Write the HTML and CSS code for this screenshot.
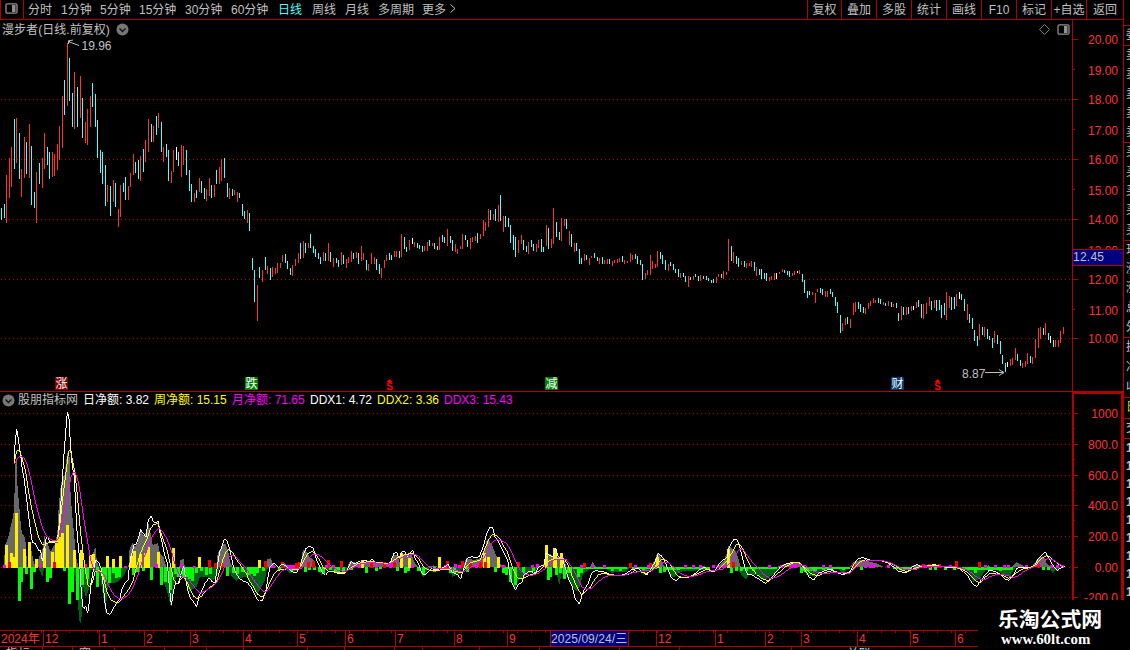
FILE: index.html
```html
<!DOCTYPE html>
<html lang="zh-CN">
<head>
<meta charset="utf-8">
<title>漫步者 日线</title>
<link rel="stylesheet" href="styles.css">
</head>
<body>
<div class="app">
  <main class="main">
    <header class="toolbar">
      <div class="toggle">
        <svg class="panel-icon" width="13" height="11" viewBox="0 0 13 11"><rect x="1" y=".8" width="11" height="9.4" rx="1.5"/><rect class="solid" x="7" y="2" width="3.5" height="7"/></svg>
      </div>
      <nav class="periods">
        <span>分时</span><span>1分钟</span><span>5分钟</span><span>15分钟</span><span>30分钟</span><span>60分钟</span><span class="active">日线</span><span>周线</span><span>月线</span><span>多周期</span><span>更多</span>
        <svg width="8" height="12" viewBox="0 0 8 12"><path class="more" d="M1.5 1.5 6 5.5 1.5 9.5"/></svg>
      </nav>
      <nav class="tools">
        <span>复权</span><span>叠加</span><span>多股</span><span>统计</span><span>画线</span><span>F10</span><span>标记</span><span>+自选</span><span>返回</span>
      </nav>
    </header>

    <section class="pane price-pane">
      <svg class="plot" width="1072" height="371" viewBox="0 20 1072 371">
        <g id="price-grid"></g>
        <g id="candles"></g>
        <g class="note">
          <path d="M68.5 44V41.5H70M68 41.5l11 4M68 41l5-1"/>
          <text x="81.500" y="50">19.96</text>
          <path d="M985 372.500H1004M999 369.500l5 3-5 3"/>
          <text x="962" y="378">8.87</text>
        </g>
        <g class="flag">
          <path class="rise" d="M55 377h12l1 1v12H55z"/><text x="55.500" y="388">涨</text>
          <path class="fall" d="M245 377h12l1 1v12h-13z"/><text x="245.500" y="388">跌</text>
          <path class="fall" d="M545 377h12l1 1v12h-13z"/><text x="545.500" y="388">减</text>
          <path class="report" d="M891 377h12l1 1v12h-13z"/><text x="891.500" y="388">财</text>
        </g>
        <g class="dividend">
          <path d="M386.500 382l3-3 3 3z"/><text x="386.300" y="390">S</text>
          <path d="M934.500 382l3-3 3 3z"/><text x="934.300" y="390">S</text>
        </g>
      </svg>
      <svg class="scale" width="51" height="371" viewBox="1072 20 51 371" id="price-scale"></svg>
      <div class="pane-title">
        <span>漫步者(日线.前复权)</span>
        <svg width="13" height="13" viewBox="0 0 13 13"><circle class="knob" cx="6.500" cy="6.500" r="6"/><path class="chevron" d="M3.500 5.500l3 3 3-3"/></svg>
      </div>
      <div class="pane-actions">
        <svg width="11" height="11" viewBox="0 0 11 11"><path class="diamond" d="M5.500.5l5 5-5 5-5-5z"/></svg>
        <svg class="panel-icon" width="13" height="11" viewBox="0 0 13 11"><rect x="1" y=".8" width="11" height="9.4" rx="1.500"/><rect class="solid" x="7" y="2" width="3.500" height="7"/></svg>
      </div>
      <div class="cursor-price">12.45</div>
    </section>

    <section class="pane flow-pane">
      <svg class="plot" width="1072" height="238" viewBox="0 392 1072 238">
        <g id="flow-grid"></g>
        <g id="flow"></g>
      </svg>
      <svg class="scale" width="51" height="238" viewBox="1072 392 51 238" id="flow-scale"></svg>
      <div class="legend">
        <svg width="13" height="13" viewBox="0 0 13 13"><circle class="knob" cx="6.500" cy="6.500" r="6"/><path class="chevron" d="M3.500 5.500l3 3 3-3"/></svg>
        <span>股朋指标网</span><span class="w">日净额: 3.82</span><span class="y">周净额: 15.15</span><span class="m">月净额: 71.65</span><span class="w">DDX1: 4.72</span><span class="y">DDX2: 3.36</span><span class="m">DDX3: 15.43</span>
      </div>
    </section>

    <div class="timeline">
      <span>2024年</span><span>12</span><span>1</span><span>2</span><span>3</span><span>4</span><span>5</span><span>6</span><span>7</span><span>8</span><span>9</span><span class="cursor-date">2025/09/24/三</span><span></span><span>12</span><span>1</span><span>2</span><span>3</span><span>4</span><span>5</span><span>6</span>
    </div>
    <div class="tabs">
      <i>指标</i><i></i><i>窗</i><i></i><i></i><i></i><i></i><i></i><i></i><i></i><i></i><i></i><i></i><i></i><i></i><i class="cy">关联</i>
    </div>
  </main>

  <aside class="quotes">
    <div class="group one"><b>委</b></div>
    <div class="group five"><b>卖</b><b>卖</b><b>卖</b><b>卖</b><b>卖</b></div>
    <div class="group five"><b>买</b><b>买</b><b>买</b><b>买</b><b>买</b></div>
    <div class="group five"><b>现</b><b>涨</b><b>涨</b><b>总</b><b>外</b></div>
    <div class="group three"><b>换</b><b>净</b><b>收</b></div>
    <div class="group tab"><b>日</b></div>
    <div class="group one"><b>交</b></div>
    <div class="ticks"><b>1</b><b>1</b><b>1</b><b>1</b><b>1</b><b>1</b><b>1</b><b>1</b><b>1</b></div>
  </aside>

  <div class="watermark"><strong>乐淘公式网</strong><em>www.60lt.com</em></div>
</div>
<script src="chart.js"></script>
</body>
</html>
```

FILE: styles.css
```css
* { box-sizing: border-box; }
body {
  margin: 0;
  background: #000;
  color: #c0c0c0;
  font: 12px/16px "Liberation Sans", "Noto Sans CJK SC", sans-serif;
  overflow: hidden;
}
span, b, i { white-space: nowrap; }
svg { display: block; flex: none; }
.app { position: relative; display: flex; width: 1130px; height: 650px; overflow: hidden; }
.main { width: 1123px; display: flex; flex-direction: column; }

.toolbar { height: 20px; display: flex; border-bottom: 1px solid #b00000; }
.toggle { width: 24px; padding: 3px 0 0 4px; border: solid #b00000; border-width: 0 1px; }
.panel-icon rect { fill: none; stroke: #909090; stroke-width: 1.3; }
.panel-icon .solid { fill: #909090; stroke: none; }
.periods {
  width: 783px; padding: 2px 0 0 4px; display: grid; align-items: start;
  grid-template-columns: 33px 39px 39px 46px 46px 47px 34px 33px 33px 44px 27px 10px;
}
.periods svg { margin-top: 1px; }
.more { fill: none; stroke: #c0c0c0; }
.active { color: #54fcfc; }
.tools { display: grid; grid-template-columns: 34px repeat(7, 35px) 37px; text-align: center; }
.tools span { border-left: 1px solid #b00000; padding-top: 2px; }

.pane { position: relative; display: flex; flex: none; }
.price-pane { height: 372px; border-bottom: 1px solid #b00000; }
.flow-pane { height: 238px; }
.pane-title { position: absolute; left: 2px; top: 2px; display: flex; align-items: center; gap: 6px; letter-spacing: .05px; }
.pane-title svg { margin-top: -2px; }
.pane-actions { position: absolute; left: 1039px; top: 4px; display: flex; gap: 7px; }
.knob { fill: #777; }
.chevron { fill: none; stroke: #111; stroke-width: 1.4; }
.diamond { fill: none; stroke: #808080; }
.cursor-price {
  position: absolute; left: 1072px; top: 229px; width: 51px; height: 17px;
  border: solid #b00000; border-width: 1px 0 1px 1px; background: #000080;
  line-height: 14px; letter-spacing: .25px;
}
.legend {
  position: absolute; left: 2px; top: 0; display: grid; align-items: center;
  grid-template-columns: 16px 65px 71px 78px 78px 67px 67px 80px;
}
.w { color: #fff; }
.y { color: #ff0; }
.m { color: #f0f; }

.dots { stroke: #b00000; stroke-dasharray: 1 3; shape-rendering: crispEdges; }
.ruler { stroke: #b00000; shape-rendering: crispEdges; fill: none; }
.thick { stroke: #b00000; stroke-width: 2; shape-rendering: crispEdges; fill: none; }
.scale text { fill: #ff3232; font-size: 12px; text-anchor: end; }
.note path { fill: none; stroke: #c0c0c0; }
.note text { fill: #c0c0c0; font-size: 12px; }
.flag text { fill: #fff; font-size: 12px; }
.rise { fill: #800000; }
.fall { fill: #008000; }
.report { fill: #003c70; }
.dividend { fill: #f00; font-weight: bold; font-size: 10px; }
.k { stroke-width: 1; shape-rendering: crispEdges; }
.k.up { stroke: #ff3232; }
.k.down { stroke: #54fcfc; }
.k.flat { stroke: #fff; }
#flow { shape-rendering: crispEdges; }
.gray { fill: #696969; }
.dark { fill: #006414; }
.green { fill: #0f0; }
.yellow { fill: #ffee00; }
.red { fill: #f00; }
.mag { fill: #f0f; }
.line { fill: none; stroke-width: 3; }
.line.white { stroke: #fff; }
.line.gold { stroke: #ff0; }
.line.pink { stroke: #f0f; }

.timeline {
  height: 17px; width: 978px; display: grid; color: #ff3232;
  border: solid #b00000; border-width: 1px 0; line-height: 17px; flex: none;
  grid-template-rows: 15px;
  grid-template-columns: 43px 56px 45px 46px 53px 54px 48px 50px 59px 53px 43px 78px 28px 59px 50px 36px 56px 53px 45px 23px;
  background: repeating-linear-gradient(90deg, transparent 0 13px, #b00000 13px 14px) 0 0 / 100% 2px no-repeat;
}
.timeline span { border-left: 1px solid #b00000; padding-left: 1px; }
.timeline span:first-child { border: 0; }
.timeline .cursor-date { background: #000080; color: #c0c0c0; padding: 0; letter-spacing: .07px; }
.tabs {
  height: 3px; width: 978px; overflow: hidden; display: grid; line-height: 14px; flex: none;
  grid-template-columns: 43px 30px 42px 50px 42px 37px 64px 37px 50px 28px 57px 60px 80px 60px 112px 1fr;
}
.tabs i { font-style: normal; border-right: 1px solid #b00000; padding-left: 6px; }
.tabs .cy { color: #54fcfc; padding-left: 55px; border: 0; }

.quotes { width: 7px; border-left: 1px solid #b00000; overflow: hidden; padding-top: 25px; }
.quotes b { display: block; font-weight: normal; flex: 1; padding-left: 2px; line-height: 18px; }
.group { border-top: 1px solid #b00000; display: flex; flex-direction: column; overflow: hidden; }
.one { height: 20px; }
.five { height: 97.400px; }
.three { height: 60px; }
.tab { height: 21px; color: #d8d800; }
.ticks { border-top: 1px solid #b00000; }
.quotes .ticks b { height: 18px; font-weight: bold; }

.watermark {
  position: absolute; left: 978px; top: 600px; width: 152px; height: 50px; background: #000; color: #fff;
  display: flex; flex-direction: column; padding: 6px 0 0 20px;
}
.watermark strong { font: bold 20.800px/24px "Noto Sans CJK SC", sans-serif; white-space: nowrap; }
.watermark em { font: bold 14.900px/18px "Liberation Serif", serif; padding-left: 3px; }
```

FILE: chart.js
```js
const el = id => document.getElementById(id);
const seg = (cls, x1, y1, x2, y2) => `<path class="${cls}" d="M${x1} ${y1}L${x2} ${y2}"/>`;

// Horizontal dotted guides
el('price-grid').innerHTML = [99, 159, 219, 279, 338].map(y => seg('dots', 1, y + .5, 1071, y + .5)).join('');
el('flow-grid').innerHTML = [413, 444, 475, 505, 536, 567, 597].map(y => seg('dots', 1, y + .5, 1071, y + .5)).join('');

// Value scales
const label = (y, t) => `<text x="1118" y="${y + 5}">${t}</text>`;
let s = seg('ruler', 1072.5, 20, 1072.5, 391);
[[39, '20.00'], [69, '19.00'], [99, '18.00'], [129, '17.00'], [159, '16.00'], [189, '15.00'], [219, '14.00'],
 [249, '13.00'], [279, '12.00'], [309, '11.00'], [338, '10.00']].forEach(([y, t], i) => {
  s += seg('ruler', 1073, y + .5, i % 2 ? 1075 : 1078, y + .5) + label(i % 2 ? y + 1 : y, t);
});
el('price-scale').innerHTML = s;
s = '<path class="thick" d="M1073 630V393H1122V630"/>';
[[413, '1000'], [444, '800.0'], [475, '600.0'], [505, '400.0'], [536, '200.0'], [567, '0.00'], [597, '-200.0']].forEach(([y, t], i) => {
  s += seg('ruler', 1074, y + .5, 1078, y + .5) + (i < 6 ? seg('ruler', 1074, y + 15.5, 1075, y + 15.5) : '') + label(y, t);
});
el('flow-scale').innerHTML = s;

// Daily high-low bars: direction, x, top, bottom in thirds of a pixel from each block's origin
const bars = [
[0, 0, `c 4 624 660;c 13 612 654;r 19 525 669;r 28 474 594;r 34 441 561;c 43 357 507;r 49 354 489;c 58 399 537;r 64 507 591;r 73 411 534;c 79 426 522;r 88 372 534;c 94 438 615;c 103 576 624;r 109 516 669;c 118 489 552;r 127 474 564;r 133 399 507;c 142 441 495;c 148 456 537;r 157 456 531;r 163 462 528;r 172 432 510;r 178 378 480;r 187 288 444;c 193 240 345;r 202 129 318;c 208 174 303;c 217 279 381;r 223 216 387;c 232 261 381;r 241 228 354;c 247 294 414;r 256 366 429;r 262 327 435;r 271 288 381;c 277 249 321;c 286 282 381;c 292 360 474;c 301 450 519;c 307 456 552;c 316 495 618;r 322 555 606;c 331 558 648;r 340 540 606;c 346 549 621;r 355 627 681;r 361 555 651;c 370 549 576;c 376 531 600;r 385 558 600;r 391 519 561;r 400 462 525;c 406 486 519;c 415 480 537;r 421 468 543;c 430 447 516;r 436 420 486;r 445 357 456;c 454 372 426;r 460 378 426;c 469 348 405;r 475 339 384;c 484 366 456;r 490 441 486;c 499 432 471;c 505 450 543;r 514 513 549;r 520 450 516;w 529 441 480;c 535 456 498;r 544 435 531;r 550 438 495;c 559 450 525;c 568 510 573;c 574 552 606;r 583 579 606;c 589 570 594;r 598 534 576;c 604 543 579;c 613 564 597;r 619 567 603;r 628 534 588;c 634 555 594;r 643 555 591;c 649 510 552;r 658 501 552;r 664 477 543;c 673 474 534;c 682 549 591;r 688 564 597;c 697 567 588;r 703 570 585;r 712 576 606;c 718 579 594;c 727 612 648;c 733 633 657;r 742 630 669;c 748 639 693`],
[0, 240, `c 757 54 90;c 763 90 186;r 772 135 243;c 778 81 114;r 787 90 126;c 796 51 90;r 802 78 102;c 811 84 120;r 817 81 111;r 826 84 102;r 832 69 99;r 841 69 84;r 847 45 66;c 856 42 69;c 862 63 87;c 871 84 105;r 877 75 108;r 886 57 78;r 895 39 69;c 901 9 57;r 910 3 54;c 916 9 39;r 925 9 24;c 931 -18 24;c 940 18 39;c 946 27 51;c 955 39 57;c 961 51 72;r 970 36 63;c 976 39 63;r 985 9 63;c 991 36 66;r 1000 54 81;c 1009 54 69;c 1015 60 81;r 1024 36 75;c 1030 45 72;r 1039 57 84;r 1045 51 69;r 1054 33 66;c 1060 39 57;r 1069 36 54;c 1075 39 72;r 1084 18 63;r 1090 39 60;c 1099 60 90;r 1105 72 93;r 1114 39 72;r 1123 51 72;c 1129 57 90;c 1138 72 102`],
[380, 180, `r 4 264 294;r 13 240 264;r 19 225 243;c 28 219 240;c 34 225 240;r 43 213 231;r 49 213 231;c 58 213 234;r 64 162 231;c 73 171 207;c 79 201 216;r 88 180 210;w 97 174 192;r 103 186 201;c 112 189 204;c 118 195 207;c 127 198 216;r 133 198 213;r 142 186 213;c 148 180 198;r 157 189 198;c 163 189 207;c 172 198 210;r 178 171 210;c 187 165 186;c 193 171 189;r 202 147 198;c 211 168 189;c 217 180 213;r 226 192 216;r 232 207 222;r 241 198 207;r 247 162 207;c 256 165 180;c 262 180 201;r 271 174 207;r 277 171 186;r 286 168 183;c 292 159 189;r 301 162 177;r 310 120 168;r 316 126 153;r 325 87 141;c 331 90 120;r 340 102 120;c 346 87 123;r 355 75 126;c 361 45 123;r 370 108 156;c 376 108 141;c 385 114 141;c 391 135 189;c 400 165 210;c 406 171 231;r 415 180 219;r 424 165 192;c 430 180 210;c 439 198 216;r 445 186 222;c 454 180 201;c 460 192 213;r 469 192 216;r 475 180 204;c 484 177 216;c 490 201 216;r 499 135 198;c 505 144 207;r 514 177 204;r 520 84 192;c 529 126 171;c 538 156 180;r 544 114 183;r 553 117 138;c 559 117 147;r 568 153 195;c 574 162 201;r 583 189 216;c 589 189 213;c 598 207 252;c 604 234 252;r 613 222 243;c 619 225 240;r 628 234 255;r 634 228 234;c 643 219 234;c 652 231 243;r 658 234 252;c 667 231 252;r 673 240 252;r 682 237 252;c 688 237 252;r 697 243 258;r 703 240 249;r 712 237 249;r 718 234 246;c 727 228 246;r 733 240 252;r 742 243 249;r 751 219 246;r 757 225 240;c 766 222 237;c 772 228 252;c 781 240 255;c 787 252 300;r 796 279 297;r 802 270 285;r 811 225 285;r 817 243 267;r 826 252 264;r 832 213 261;c 841 216 237;c 847 225 252;c 856 240 270;r 865 252 273;c 871 246 258;c 880 252 270;c 886 267 279;c 895 267 291;r 901 279 294;c 910 279 291;c 916 288 306;r 925 288 321;c 931 291 300;r 940 288 300;c 946 282 291;c 955 288 303;r 961 285 303;c 970 288 297;c 979 288 300;c 985 294 303;c 994 300 309;c 1000 297 309;r 1009 291 309;r 1015 282 291;c 1024 282 294;r 1030 273 297;r 1039 276 285;r 1045 177 273;c 1054 198 243;r 1060 216 249;c 1069 228 252;c 1075 234 261;r 1084 243 255;c 1093 243 261;r 1099 249 264;r 1108 249 258;r 1114 243 261;c 1123 246 273;r 1129 261 288;c 1138 267 285`],
[760, 230, `c 4 117 147;c 13 129 147;c 19 129 153;r 28 141 153;r 34 138 150;r 43 129 150;w 49 129 147;r 58 126 132;r 67 117 126;c 73 120 129;c 82 123 135;c 88 123 141;r 97 129 138;r 103 123 135;w 112 123 129;r 118 120 132;c 127 132 156;c 133 150 189;c 142 183 204;c 148 183 195;r 157 186 195;r 166 189 219;r 172 177 186;c 181 174 189;c 187 177 195;r 196 183 201;r 202 183 201;c 211 177 192;c 217 186 201;c 226 201 228;c 232 216 249;c 241 255 309;r 247 279 303;r 256 264 285;c 262 261 282;r 271 267 294;r 280 219 255;r 286 216 246;c 295 216 237;c 301 222 246;c 310 231 249;r 316 234 252;r 325 219 237;r 331 213 228;r 340 204 219;r 346 210 219;c 355 204 219;c 361 207 222;r 370 216 225;c 376 219 228;r 385 213 228;c 394 216 231;r 400 222 231;c 409 219 234;c 415 249 273;r 424 228 270;c 430 231 255;r 439 231 255;c 445 231 252;r 454 228 243;w 460 228 240;r 469 216 234;c 475 210 231;c 484 222 264;r 490 222 267;r 499 219 252;r 508 201 228;c 514 213 240;r 523 210 234;c 529 210 243;c 538 210 240;c 544 225 264;c 553 219 255;r 559 186 270;r 568 198 234;c 574 201 240;c 583 201 237;r 589 192 228;w 598 186 207;c 604 192 210;c 613 207 243;r 622 222 270;c 628 252 279;c 637 264 297;c 643 300 333;c 652 318 348;r 658 282 330;c 667 291 315;r 673 291 321;c 682 297 327;c 688 318 330;c 697 324 354;r 703 303 339;c 712 315 342;c 721 333 372;c 727 375 402;c 736 399 426;w 742 396 411;r 751 387 408;r 757 384 405;r 766 354 390;c 772 372 393;c 781 390 408;r 787 399 414;r 796 393 411;r 802 369 402;c 811 378 399;r 817 381 402;r 826 327 384;r 835 294 354;r 841 291 327;c 850 294 315;r 856 279 315;c 865 309 330;w 871 318 339;c 880 330 351;r 886 330 351;r 895 330 351;r 901 303 339;r 910 291 312`]];
const kind = { c: 'down', r: 'up', w: 'flat' };
el('candles').innerHTML = bars.map(([ox, oy, d]) => d.split(';').map(b => {
  const [k, x, a, z] = b.split(' ');
  const px = ox + Math.floor(x / 3) + .5;
  return seg('k ' + kind[k], px, oy + a / 3, px, oy + z / 3);
}).join('')).join('');

// Money-flow histogram and DDX curves, same units as above
const flow = [
{ ox: 0, oy: 390, zero: 531,
  gray: '12,531 15,465 22,450 28,430 34,400 40,380 44,300 48,180 50,215 53,300 58,350 62,400 66,430 72,437 76,450 82,531 84,531 90,460 100,510 106,531 118,500 127,480 133,438 139,455 145,465 151,485 157,475 166,460 172,430 176,350 182,290 188,255 193,260 199,210 203,185 208,180 211,300 217,380 223,440 228,500 235,531 268,531 274,500 280,487 286,468 290,510 296,531 385,531 389,475 398,457 405,470 412,460 421,420 430,435 440,425 445,400 452,430 458,465 466,462 474,460 480,490 490,500 499,531 538,531 541,510 552,507 554,531 649,531 653,490 662,475 668,460 676,462 684,480 690,515 697,531 795,531 802,508 812,505 818,520 825,525 828,531',
  dark: '115,531 127,560 133,531 215,531 225,560 233,630 240,710 246,670 250,590 258,625 268,590 272,540 290,545 300,560 310,620 317,670 322,600 330,580 345,580 360,570 372,555 385,531 475,531 490,570 500,600 514,655 520,590 530,560 540,560 550,555 560,580 568,605 575,600 590,590 600,560 620,560 640,572 650,560 660,531 685,531 695,560 710,572 720,565 740,560 760,590 770,612 780,600 795,570 800,540 810,531',
  yellow: '19,465 34,489 40,500 49,369 73,477 88,456 109,508 133,474 157,486 169,460 178,440 187,430 202,405 223,480 243,480 271,495 279,492 322,498 340,507 361,498 393,498 402,484 421,493 436,488 445,472 475,487 520,474 598,501 778,510',
  red: '28,516 163,516 628,510 796,513 646,518 664,520', mag: '12,526 121,526 256,522 376,528 469,522 543,522 583,528 820,528',
  green: '58,632 64,576 79,552 94,597 103,545 142,576 151,563 193,542 208,641 217,605 232,629 247,585 262,567 292,591 310,560 316,575 328,578 340,550 349,565 358,560 400,556 411,545 430,542 454,570 484,585 496,575 511,600 526,552 535,560 550,560 560,560 568,567 577,572 590,550 605,542 618,556 632,552 682,557 700,548 712,552 726,545 745,555 754,553 763,558 772,550 790,542',
  white: '43,222 45,165 50,118 54,140 58,170 63,205 67,240 73,270 79,320 85,370 91,420 97,457 105,460 115,480 122,482 127,514 132,490 138,447 143,438 148,453 160,457 172,455 178,400 184,320 190,220 196,140 202,65 207,85 211,160 217,230 223,260 227,350 232,440 238,500 243,590 248,650 254,655 257,647 263,670 268,635 273,580 280,540 287,510 296,518 303,535 310,590 316,650 321,670 330,673 340,655 350,640 360,625 365,600 375,580 384,570 388,530 393,500 402,465 410,460 415,445 422,418 429,430 438,440 445,390 454,378 460,395 468,398 474,393 480,430 487,460 494,495 502,520 508,590 514,645 520,605 526,580 536,582 545,545 551,528 556,560 563,600 572,625 580,635 590,650 598,615 606,600 615,580 628,563 636,575 645,578 652,530 658,490 667,465 674,446 682,455 688,475 694,500 700,530 708,550 718,565 730,573 742,577 752,590 762,610 770,625 779,634 788,630 798,600 806,550 810,530',
  gold: '43,222 46,200 50,184 58,180 66,205 76,240 85,300 95,355 105,400 115,440 127,465 135,464 145,458 160,455 172,453 180,400 190,310 200,230 206,182 211,180 217,210 223,240 229,285 235,350 241,420 248,480 256,540 264,585 270,590 278,575 285,545 295,541 303,545 312,570 322,610 335,632 350,638 358,637 370,620 385,600 400,570 410,530 420,495 430,470 440,450 450,420 460,405 474,400 482,425 492,455 500,475 510,520 520,565 530,583 540,570 550,560 560,575 572,600 582,620 592,626 605,618 620,600 635,588 648,580 660,540 670,505 680,482 688,478 700,490 710,510 725,530 738,550 750,575 760,590 772,612 782,620 792,617 800,600 810,575',
  pink: '43,222 50,208 60,199 72,203 82,225 92,265 105,330 115,370 127,412 140,438 150,448 165,453 175,448 185,410 195,360 205,300 212,265 218,248 225,246 235,275 242,320 252,390 262,450 272,510 282,538 300,545 312,555 325,585 340,612 355,626 370,625 385,615 400,590 412,560 425,520 440,482 452,450 465,425 477,415 488,425 500,445 512,475 524,520 538,555 552,562 565,567 580,587 595,605 605,609 620,600 640,588 655,570 670,540 684,505 695,495 708,500 722,518 738,535 755,560 770,582 785,600 795,606 805,600 810,592' },
{ ox: 270, oy: 390, zero: 531,
  gray: '35,531 45,518 50,531 92,531 98,482 105,480 118,500 130,510 138,531 232,531 240,512 262,520 300,515 352,522 362,512 372,495 382,495 390,520 395,490 425,495 432,515 445,531 470,531 490,526 505,531 580,531 588,505 615,510 640,500 650,450 657,450 668,470 680,500 690,522 712,531 818,531 828,495 840,490 850,500 865,500 880,520 885,531',
  dark: '40,531 60,550 85,540 90,531 140,531 155,555 165,540 230,545 235,531 445,531 460,563 470,545 480,531 536,531 547,560 570,550 580,531 708,531 720,560 735,598 745,570 760,560 775,550 800,545 810,531 855,531 868,585 875,550 885,560 885,531',
  yellow: '276,511 395,488 418,505 508,501 642,490 655,500 686,501 829,466 852,475 857,482 875,490',
  red: '37,516 78,519 87,516 115,516 130,513 176,511 214,513 305,516 343,516 372,516 532,514 577,514 602,516 632,516 647,516 745,516',
  mag: '5,525 52,525 60,525 70,525 170,525 190,525 250,525 268,525 320,525 360,522 428,525 525,525 557,522 569,525 620,525 700,525 788,525 803,522',
  green: '27,540 63,542 106,545 118,540 133,540 148,545 160,552 182,540 196,548 205,550 220,550 244,540 289,548 320,542 330,538 382,544 406,548 415,542 445,542 460,555 493,545 541,548 552,548 592,545 677,546 700,550 708,556 722,575 736,585 760,548 790,542 835,570 842,560 860,556 870,550 883,567',
  white: '0,530 12,519 25,533 38,522 50,530 65,545 80,548 90,530 98,500 108,475 118,469 130,475 140,510 150,530 158,550 166,556 175,545 190,545 205,551 225,549 235,532 244,515 252,522 265,515 275,517 285,511 297,515 307,507 318,518 335,518 352,524 362,515 372,490 380,488 387,503 395,486 405,486 412,500 418,490 428,480 435,505 445,520 455,550 463,555 475,545 485,535 495,540 515,535 525,530 535,522 545,545 555,550 563,555 572,566 582,535 592,505 605,500 618,503 628,500 640,470 650,430 660,412 668,413 675,440 685,455 695,475 705,495 713,510 718,545 726,580 737,599 745,583 755,578 762,555 775,545 785,543 790,550 797,548 803,535 812,528 822,526 828,488 838,495 848,500 857,475 865,500 871,505',
  gold: '0,575 10,555 22,543 35,538 60,536 85,540 100,515 112,492 125,484 135,490 148,510 160,532 175,543 200,547 225,546 240,535 265,520 300,514 330,518 355,522 375,508 390,500 405,493 430,490 445,505 460,530 475,540 500,541 540,537 560,545 575,548 590,530 600,518 615,515 630,510 645,475 658,445 668,433 680,438 690,448 702,470 712,485 720,510 730,540 742,563 755,567 765,562 780,555 800,548 815,535 828,518 845,508 871,505',
  pink: '0,592 15,570 30,548 45,537 75,536 95,535 110,515 125,495 140,492 155,500 170,515 185,530 205,542 225,544 245,535 270,522 300,517 350,523 375,515 400,500 430,492 445,497 460,515 475,530 495,537 540,537 570,545 585,543 605,530 625,522 640,508 655,480 668,455 680,449 695,452 710,460 722,480 735,510 750,540 765,553 785,556 805,550 825,537 840,520 855,508 871,507' },
{ ox: 560, oy: 520, zero: 141,
  gray: '0,141 0,120 15,125 18,141 90,141 97,125 108,141 272,141 285,120 292,98 300,105 305,125 315,141 415,141 430,138 440,141 470,141 490,125 500,100 506,75 515,85 525,90 535,115 540,135 545,141 650,141 680,130 720,130 725,141',
  dark: '12,141 25,180 40,205 50,212 60,200 68,165 85,150 100,141 130,141 155,158 200,155 210,141 240,141 250,165 270,145 320,141 330,170 345,170 360,155 430,150 440,141 530,141 545,165 558,180 565,165 590,165 615,180 630,170 650,155 660,141 722,141 740,165 765,170 775,155 800,150 830,141 850,160 865,141',
  strips: [[20, 200, 147], [215, 290, 147], [315, 360, 151], [360, 450, 147], [545, 650, 148], [722, 770, 153], [770, 870, 147]],
  yellow: '4,100 292,110 506,87', red: '73,130 211,130 271,130 520,126',
  mag: '65,134 97,134 133,134 225,136 265,136 375,136 400,136 420,136 460,136 475,135 490,135 628,136 665,136 695,133 705,133 730,136 790,136 810,136',
  green: '13,177 25,160 30,158 55,170 64,158 157,152 180,152 250,152 300,158 312,155 323,150 513,160 528,153 545,153 560,152 580,152 725,160 735,155 750,152 790,151 850,151',
  white: '0,115 8,118 15,140 25,175 35,195 45,235 58,252 68,220 75,205 85,190 95,160 105,152 125,154 140,158 155,166 185,166 200,160 215,148 235,146 245,155 260,165 272,150 285,125 295,100 305,108 315,125 325,150 335,175 347,182 360,173 385,172 400,165 420,148 435,142 450,152 462,156 475,135 490,120 502,112 508,80 520,60 532,60 540,85 548,115 555,145 562,163 575,165 590,173 605,183 617,190 630,180 645,160 660,142 680,130 710,127 722,130 735,150 748,172 762,180 775,160 800,150 815,148 830,158 850,165 870,155',
  gold: '0,115 12,117 22,130 35,165 50,200 65,225 80,210 90,203 100,185 115,165 130,160 150,164 185,167 205,163 225,152 260,160 280,148 295,125 310,117 325,125 340,150 355,170 380,173 410,162 440,148 465,153 480,145 500,125 515,100 528,75 538,72 550,90 562,120 575,145 590,163 605,175 622,182 640,173 660,155 680,138 700,129 720,128 735,145 755,162 775,168 795,158 815,152 840,158 860,160 870,158',
  pink: '0,118 18,118 35,140 50,170 65,200 80,208 95,205 115,185 135,170 155,166 190,166 220,158 250,152 275,152 295,138 310,127 325,127 345,145 360,160 385,170 410,167 440,155 470,150 490,147 510,130 525,105 540,87 550,90 565,110 580,130 595,145 610,162 630,175 650,172 670,160 690,145 715,134 735,137 760,153 785,162 820,158 850,158 870,160' },
{ ox: 850, oy: 390, zero: 531,
  gray: '0,531 10,517 30,510 60,515 85,522 100,531 180,531 200,522 230,531 410,531 415,525 420,531 485,531 500,517 515,525 525,531 545,531 560,510 575,500 585,505 590,520 600,531',
  dark: '130,531 155,543 175,540 180,531 335,531 355,545 370,575 390,565 400,550 410,535 440,540 460,555 480,560 490,540 500,531 597,531 609,550 615,540 625,545 632,531',
  strips: [[335, 490, 540], [130, 185, 536]],
  yellow: '', red: '10,518 220,522 238,522 268,522 319,513 388,516 565,520',
  mag: '45,525 60,525 70,522 115,526 205,526 225,526 300,526 405,526 435,526 462,526 475,526 530,526 605,526 622,526 637,525',
  green: '35,541 150,541 180,541 195,541 240,541 255,541 285,541 313,541 325,537 360,541 375,548 450,543 580,541 595,541',
  white: '0,548 10,525 22,508 38,502 52,508 75,513 100,513 115,520 130,530 145,543 158,547 172,547 185,532 200,523 215,530 240,527 252,522 270,530 300,532 320,531 340,545 355,560 368,583 380,590 392,572 405,555 418,540 435,545 450,552 465,568 478,571 490,555 500,535 515,532 540,532 555,525 565,505 575,495 586,485 594,500 602,515 612,530 622,541 635,532 645,530',
  gold: '0,550 15,530 30,515 45,510 80,511 110,515 135,527 155,540 172,545 190,537 210,530 250,527 300,530 330,535 350,545 365,560 380,575 392,578 405,562 420,550 440,549 455,555 475,565 485,562 500,548 515,538 545,532 560,522 575,505 590,497 600,500 612,512 625,523 640,530',
  pink: '0,550 20,530 40,515 65,511 100,512 120,518 145,530 165,540 190,539 220,530 270,528 320,531 345,537 360,545 375,557 390,568 405,570 420,560 445,552 470,556 490,562 505,558 520,545 545,533 565,525 580,510 595,506 610,510 625,520 643,531' }];

const columns = (b, name) => b[name].split(' ').filter(Boolean).map(p => {
  const [x, y] = p.split(',').map(Number);
  const left = Math.round((x - 4.5) / 3) * 3;
  return `<rect class="${name}" x="${left}" y="${Math.min(y, b.zero)}" width="9" height="${Math.abs(y - b.zero) + (y < b.zero ? 2 : 0)}"/>`;
}).join('');
el('flow').innerHTML = flow.map(b => {
  const strips = (b.strips || []).map(([a, z, y]) => `<rect class="green" x="${a}" y="${b.zero}" width="${z - a}" height="${y - b.zero}"/>`).join('');
  return `<g transform="translate(${b.ox} ${b.oy}) scale(.333333)"><polygon class="gray" points="${b.gray}"/><polygon class="dark" points="${b.dark}"/>` +
    strips + ['green', 'yellow', 'red', 'mag'].map(n => columns(b, n)).join('') +
    ['white', 'gold', 'pink'].map(n => `<polyline class="line ${n}" points="${b[n]}"/>`).join('') + '</g>';
}).join('');
```
